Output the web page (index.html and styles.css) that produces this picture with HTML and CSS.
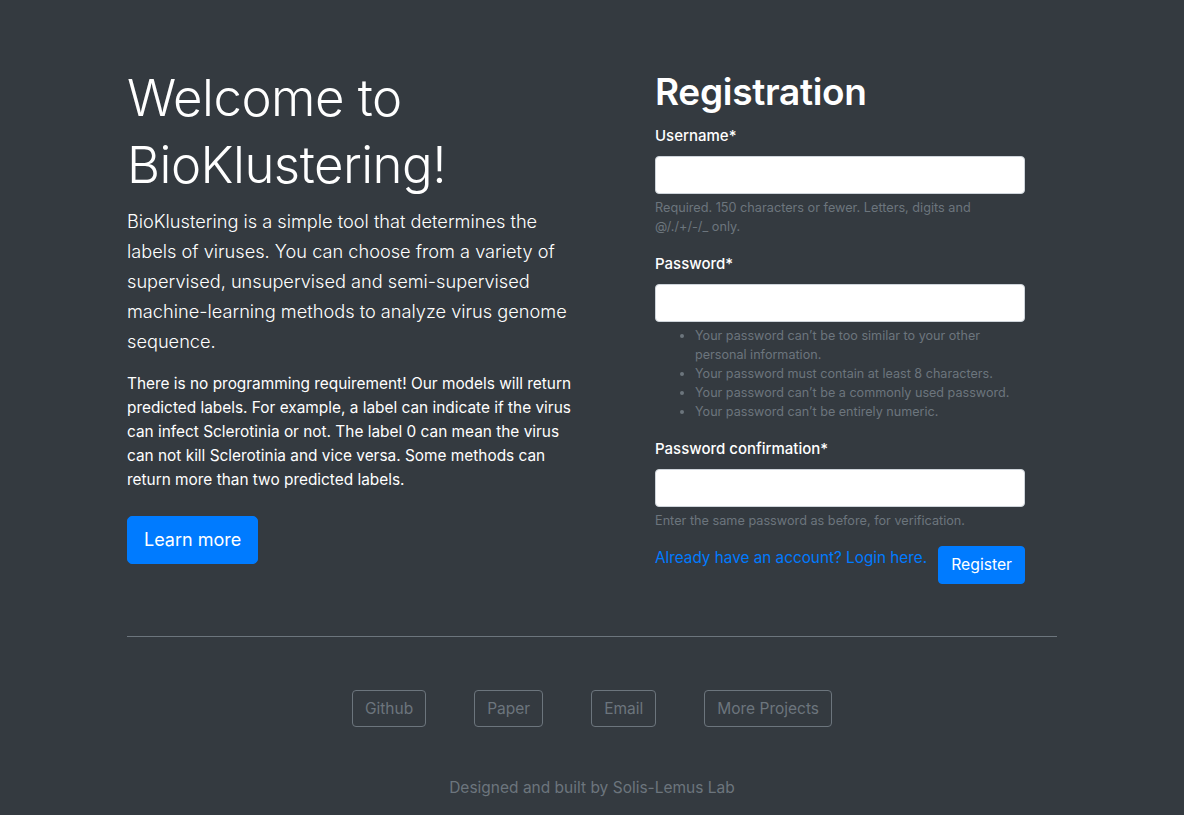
FILE: index.html
```html
<!DOCTYPE html>
<html lang="en">
<head>
<meta charset="utf-8">
<title>BioKlustering</title>
<link rel="stylesheet" href="styles.css">
</head>
<body>
<main class="container">
  <section class="hero">
    <div class="intro">
      <h1 class="display">Welcome to BioKlustering!</h1>
      <p class="lead">BioKlustering is a simple tool that determines the labels of viruses. You can choose from a variety of supervised, unsupervised and semi-supervised machine-learning methods to analyze virus genome sequence.</p>
      <p class="body-text">There is no programming requirement! Our models will return predicted labels. For example, a label can indicate if the virus can infect Sclerotinia or not. The label 0 can mean the virus can not kill Sclerotinia and vice versa. Some methods can return more than two predicted labels.</p>
      <a class="btn btn-primary btn-lg" href="#">Learn more</a>
    </div>
    <div class="register">
      <h2 class="reg-title">Registration</h2>
      <form class="form">
        <div class="field">
          <label class="label">Username*</label>
          <input class="input" type="text">
          <small class="help">Required. 150 characters or fewer. Letters, digits and @/./+/-/_ only.</small>
        </div>
        <div class="field">
          <label class="label">Password*</label>
          <input class="input" type="password">
          <ul class="help help-list">
            <li>Your password can’t be too similar to your other personal information.</li>
            <li>Your password must contain at least 8 characters.</li>
            <li>Your password can’t be a commonly used password.</li>
            <li>Your password can’t be entirely numeric.</li>
          </ul>
        </div>
        <div class="field">
          <label class="label">Password confirmation*</label>
          <input class="input" type="password">
          <small class="help">Enter the same password as before, for verification.</small>
        </div>
        <div class="actions">
          <a class="login-link" href="#">Already have an account? Login here.</a>
          <button class="btn btn-primary" type="button">Register</button>
        </div>
      </form>
    </div>
  </section>
  <hr class="divider">
  <footer class="footer">
    <nav class="links">
      <a class="btn btn-outline" href="#">Github</a>
      <a class="btn btn-outline" href="#">Paper</a>
      <a class="btn btn-outline" href="#">Email</a>
      <a class="btn btn-outline" href="#">More Projects</a>
    </nav>
    <p class="credit">Designed and built by Solis-Lemus Lab</p>
  </footer>
</main>
</body>
</html>
```

FILE: styles.css
```css
* { box-sizing: border-box; }

html, body {
  margin: 0;
  padding: 0;
}

body {
  background: #343a40;
  color: #fff;
  font-family: Inter, "Noto Sans", "Liberation Sans", sans-serif;
  font-size: 16px;
  line-height: 1.5;
  min-height: 815px;
}

.container {
  width: 930px;
  margin: 0 auto;
}

.hero {
  display: flex;
  align-items: flex-start;
  gap: 78px;
  padding-top: 64px;
}

.intro {
  width: 450px;
}

.display {
  margin: 0 0 8px;
  font-size: 50.9px;
  font-weight: 300;
  line-height: 67px;
  letter-spacing: -0.5px;
}

.lead {
  margin: 0 0 16px;
  font-size: 18.2px;
  font-weight: 300;
  line-height: 30px;
}

.body-text {
  margin: 0 0 16px;
  font-size: 15.4px;
  line-height: 24px;
}

.btn {
  display: inline-block;
  border: 1px solid transparent;
  border-radius: 4px;
  font-family: inherit;
  font-size: 15.7px;
  line-height: 24px;
  padding: 6px 12px;
  text-decoration: none;
  cursor: pointer;
}

.btn-primary {
  background: #007bff;
  border-color: #007bff;
  color: #fff;
}

.btn-lg {
  font-size: 18px;
  line-height: 30px;
  padding: 8px 16px;
  border-radius: 5px;
  margin-top: 8px;
}

.register {
  width: 370px;
  padding-top: 4px;
}

.reg-title {
  margin: 0 0 8px;
  font-size: 37px;
  font-weight: 600;
  line-height: 48px;
  letter-spacing: -0.3px;
}

.field {
  margin-bottom: 16px;
}

.label {
  display: block;
  margin-bottom: 8px;
  font-size: 15px;
  font-weight: 500;
  line-height: 24px;
}

.input {
  display: block;
  width: 100%;
  height: 38px;
  border: 1px solid #ced4da;
  border-radius: 4px;
  background: #fff;
  font-family: inherit;
  font-size: 16px;
}

.help {
  display: block;
  margin-top: 4px;
  color: #6c757d;
  font-size: 12.7px;
  line-height: 19px;
}

.help-list {
  margin: 4px 0 0;
  padding-left: 40px;
  font-size: 12.6px;
}

.actions {
  display: flex;
  align-items: flex-start;
  justify-content: space-between;
  margin-top: 16px;
}

.login-link {
  color: #007bff;
  text-decoration: none;
  font-size: 15.3px;
  line-height: 24px;
}

.divider {
  margin: 52px 0 0;
  border: 0;
  border-top: 1px solid #6c757d;
}

.footer {
  text-align: center;
}

.links {
  display: flex;
  justify-content: center;
  gap: 48px;
  margin-top: 53px;
}

.btn-outline {
  border-color: #6c757d;
  color: #6c757d;
  font-size: 15.5px;
  line-height: 23px;
  padding: 6px 12px;
}

.credit {
  margin: 49px 0 0;
  color: #6c757d;
  font-size: 15.5px;
}
```
